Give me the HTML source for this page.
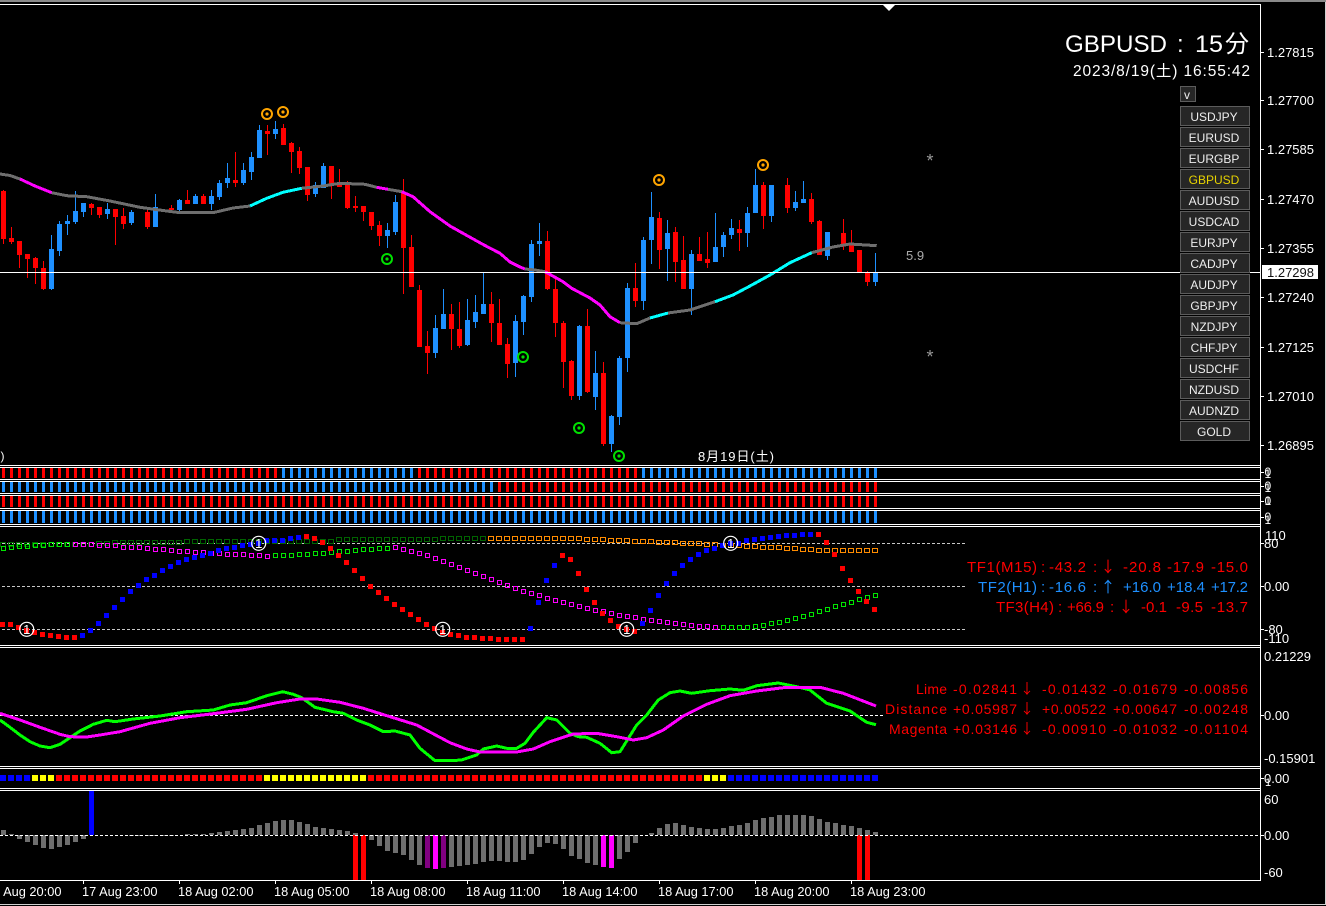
<!DOCTYPE html>
<html lang="ja">
<head>
<meta charset="utf-8">
<title>GBPUSD : 15分</title>
<style>
html,body{margin:0;padding:0;background:#000;width:1326px;height:906px;overflow:hidden}
svg{display:block;position:absolute;left:0;top:0}
text{font-family:"Liberation Sans","Noto Sans CJK JP",sans-serif;fill:#fff;font-size:13px;white-space:pre}
.c{shape-rendering:crispEdges}
.btn rect{fill:#262626;stroke:#5c5c5c;stroke-width:1;shape-rendering:crispEdges}
.btn text{font-size:12px;text-anchor:middle;fill:#eee}
.r text{fill:#f00;font-size:15px}
.b text{fill:#1e90ff;font-size:15px}
.l text{fill:#f00;font-size:14px}
.r .a,.b .a,.l .a{font-family:"Noto Sans CJK JP",sans-serif}
.t text{font-size:12.8px}
polyline{fill:none;stroke:none}
</style>
</head>
<body>
<svg width="1326" height="906" viewBox="0 0 1326 906" xmlns="http://www.w3.org/2000/svg">
<defs>
<marker id="fr" markerUnits="userSpaceOnUse" markerWidth="12" markerHeight="12" refX="5" refY="5"><rect class="c" x="2" y="3" width="5" height="5" fill="#f00"/></marker>
<marker id="fb" markerUnits="userSpaceOnUse" markerWidth="12" markerHeight="12" refX="5" refY="5"><rect class="c" x="2" y="3" width="5" height="5" fill="#00f"/></marker>
</defs>

<!-- top bar and window edges -->
<rect class="c" x="0" y="0" width="1326" height="2" fill="#8a8a8a"/>
<rect class="c" x="0" y="904" width="1326" height="1" fill="#d0d0d0"/>
<rect class="c" x="1325" y="2" width="1" height="903" fill="#d0d0d0"/>

<!-- candles: red wicks -->
<path class="c" fill="none" stroke="#f00" stroke-width="1" d="M3.5 190V244M11.5 227V244M19.5 241V268M27.5 254V278M35.5 257V284M43.5 261V290M91.5 203V215M99.5 207V218M115.5 209V245M123.5 208V229M147.5 210V229M171.5 205V210M187.5 190V204M203.5 194V204M235.5 152V187M267.5 125V155M283.5 124V145M291.5 142V173M299.5 147V174M307.5 167V201M331.5 166V199M339.5 169V187M347.5 181V209M355.5 196V212M363.5 206V221M371.5 212V230M379.5 221V246M403.5 179V294M411.5 235V287M419.5 285V347M427.5 331V374M451.5 304V350M459.5 302V348M491.5 292V342M499.5 299V345M507.5 338V378M547.5 231V290M555.5 279V337M563.5 321V388M571.5 360V400M587.5 309V393M603.5 362V446M635.5 263V307M659.5 212V269M675.5 227V282M683.5 236V289M699.5 237V261M707.5 232V268M739.5 220V251M763.5 182V229M787.5 178V213M811.5 193V224M819.5 220V255M843.5 219V250M851.5 230V252M859.5 250V273M867.5 271V286"/>
<!-- candles: red bodies -->
<path class="c" fill="none" stroke="#f00" stroke-width="5" d="M3.5 191V239M11.5 238V242M19.5 241V255M27.5 254V259M35.5 258V268M43.5 268V289M91.5 204V208M99.5 207V215M115.5 209V217M123.5 216V224M147.5 212V227M171.5 208V210M187.5 200V204M203.5 196V204M235.5 180V183M267.5 131V134M283.5 128V145M291.5 143V152M299.5 151V168M307.5 167V195M331.5 166V184M339.5 184V187M347.5 185V208M355.5 206V208M363.5 206V212M371.5 212V226M379.5 225V236M403.5 192V248M411.5 247V287M419.5 290V347M427.5 346V353M451.5 314V329M459.5 329V346M491.5 304V323M499.5 323V345M507.5 344V364M547.5 241V289M555.5 289V323M563.5 323V362M571.5 361V396M587.5 326V392M603.5 373V444M635.5 288V301M659.5 218V250M675.5 232V262M683.5 260V289M699.5 254V261M707.5 259V263M739.5 229V233M763.5 185V216M787.5 185V208M811.5 199V222M819.5 221V255M843.5 233V245M851.5 245V252M859.5 250V273M867.5 272V282"/>
<!-- candles: blue wicks -->
<path class="c" fill="none" stroke="#1e90ff" stroke-width="1" d="M51.5 235V290M59.5 221V256M67.5 215V235M75.5 191V224M83.5 203V217M107.5 203V219M131.5 210V225M155.5 194V227M179.5 199V211M195.5 194V204M211.5 190V210M219.5 180V200M227.5 163V188M243.5 163V185M251.5 152V180M259.5 125V158M275.5 121V139M315.5 182V197M323.5 163V188M387.5 223V248M395.5 195V235M435.5 315V358M443.5 289V329M467.5 299V346M475.5 295V328M483.5 273V314M515.5 315V377M523.5 295V335M531.5 240V302M539.5 223V256M579.5 325V400M595.5 351V410M611.5 415V452M619.5 356V425M627.5 283V372M643.5 237V310M651.5 192V264M667.5 220V281M691.5 250V315M715.5 213V262M723.5 232V257M731.5 219V239M747.5 207V247M755.5 169V213M771.5 185V222M795.5 191V211M803.5 181V203M827.5 232V260M875.5 253V286"/>
<!-- candles: blue bodies -->
<path class="c" fill="none" stroke="#1e90ff" stroke-width="5" d="M51.5 249V289M59.5 224V251M67.5 221V224M75.5 211V222M83.5 203V212M107.5 209V214M131.5 212V223M155.5 207V227M179.5 200V210M195.5 196V204M211.5 196V204M219.5 183V197M227.5 178V183M243.5 170V183M251.5 157V172M259.5 130V158M275.5 129V134M315.5 185V194M323.5 166V188M387.5 230V236M395.5 202V232M435.5 328V353M443.5 314V329M467.5 320V345M475.5 312V322M483.5 304V314M515.5 321V363M523.5 296V322M531.5 244V297M539.5 241V244M579.5 326V396M595.5 373V397M611.5 416V444M619.5 358V417M627.5 288V358M643.5 240V301M651.5 217V240M667.5 233V249M691.5 254V289M715.5 247V262M723.5 235V247M731.5 228V235M747.5 213V233M755.5 185V213M771.5 185V216M795.5 202V208M803.5 199V203M827.5 232V256M875.5 272V282"/>

<!-- moving average -->
<g class="c" fill="none" stroke-width="3" stroke-linejoin="round">
<polyline style="stroke:#6e6e6e" points="0,174 10,175.5 20,179"/>
<polyline style="stroke:#f0f" points="20,179 35,186 51.7,192.7"/>
<polyline style="stroke:#6e6e6e" points="51.7,192.7 66.7,195.7 86.7,196.7 110,201 140,207.3 166.7,211 180,212.7 213,212.7 233,208 250,206"/>
<polyline style="stroke:#0ff" points="250,206 266.7,198.3 283,192.3 301.7,188.3"/>
<polyline style="stroke:#6e6e6e" points="301.7,188.3 323,186 340,183.3 365,184.3 376.7,187.3"/>
<polyline style="stroke:#f0f" points="376.7,187.3 388,189.3"/>
<polyline style="stroke:#6e6e6e" points="388,189.3 401.7,191.7"/>
<polyline style="stroke:#f0f" points="401.7,191.7 413,196.7 430,211.7 450,226 466,235 484,245 500,253.3 510,262 520,267 525,269"/>
<polyline style="stroke:#6e6e6e" points="525,269 535,270 545,271.7"/>
<polyline style="stroke:#f0f" points="545,271.7 563,281.7 571.7,288.3 590,298 600,305 610,316.7 620,322.7"/>
<polyline style="stroke:#6e6e6e" points="620,322.7 636.7,323.7 650,318"/>
<polyline style="stroke:#0ff" points="650,318 668,313"/>
<polyline style="stroke:#6e6e6e" points="668,313 690,310 715,301.7"/>
<polyline style="stroke:#0ff" points="715,301.7 733,295 750,286 770,275 790,262.7 811.7,252.7"/>
<polyline style="stroke:#6e6e6e" points="811.7,252.7 833,247 850,244 876.7,245.7"/>
</g>

<!-- current price line and frames -->
<path class="c" fill="none" stroke="#fff" stroke-width="1" d="M0 272.5H1260M0 4.5H1260M0 465.5H1260M0 467.5H1260M0 479.5H1260M0 481.5H1260M0 493.5H1260M0 495.5H1260M0 508.5H1260M0 510.5H1260M0 524.5H1260M0 526.5H1260M0 645.5H1260M0 647.5H1260M0 766.5H1260M0 768.5H1260M0 788.5H1260M0 790.5H1260M0 880.5H1260M1260.5 4V881"/>
<polygon points="883,5 895,5 889,11" fill="#fff"/>

<!-- markers -->
<g fill="none" stroke="#ffa500" stroke-width="2">
<circle cx="267" cy="114" r="5"/><circle cx="283" cy="112" r="5"/><circle cx="659" cy="180" r="5"/><circle cx="763" cy="165" r="5"/>
</g>
<g fill="#ffa500"><circle cx="267" cy="114" r="1.6"/><circle cx="283" cy="112" r="1.6"/><circle cx="659" cy="180" r="1.6"/><circle cx="763" cy="165" r="1.6"/></g>
<g fill="none" stroke="#00e000" stroke-width="2">
<circle cx="387" cy="259" r="5"/><circle cx="523" cy="357" r="5"/><circle cx="579" cy="428" r="5"/><circle cx="619" cy="456" r="5"/>
</g>
<g fill="#00e000"><circle cx="387" cy="259" r="1.6"/><circle cx="523" cy="357" r="1.6"/><circle cx="579" cy="428" r="1.6"/><circle cx="619" cy="456" r="1.6"/></g>

<text x="926.5" y="167" style="fill:#999;font-size:18px">*</text>
<text x="926.5" y="363" style="fill:#999;font-size:18px">*</text>
<text x="906" y="260" style="fill:#aaa">5.9</text>
<text x="0.5" y="460" style="font-size:12px">)</text>
<text x="698" y="461" textLength="76" lengthAdjust="spacing" style="font-size:13px">8月19日(土)</text>

<!-- title -->
<text x="1065" y="52" textLength="102" lengthAdjust="spacingAndGlyphs" style="font-size:24px">GBPUSD</text>
<text x="1177" y="52" style="font-size:24px">:</text>
<text x="1195" y="52" textLength="28" lengthAdjust="spacingAndGlyphs" style="font-size:24px">15</text>
<text x="1225" y="52" style="font-size:24px">分</text>
<text x="1073" y="76" textLength="177" lengthAdjust="spacing" style="font-size:15.5px">2023/8/19(土) 16:55:42</text>

<!-- buttons -->
<g class="btn">
<rect x="1180.5" y="86.5" width="15" height="15"/><text x="1187" y="99">v</text>
<rect x="1180.5" y="106.5" width="69" height="19"/><text x="1214" y="121">USDJPY</text>
<rect x="1180.5" y="127.5" width="69" height="19"/><text x="1214" y="142">EURUSD</text>
<rect x="1180.5" y="148.5" width="69" height="19"/><text x="1214" y="163">EURGBP</text>
<rect x="1180.5" y="169.5" width="69" height="19"/><text x="1214" y="184" style="fill:#e6d200">GBPUSD</text>
<rect x="1180.5" y="190.5" width="69" height="19"/><text x="1214" y="205">AUDUSD</text>
<rect x="1180.5" y="211.5" width="69" height="19"/><text x="1214" y="226">USDCAD</text>
<rect x="1180.5" y="232.5" width="69" height="19"/><text x="1214" y="247">EURJPY</text>
<rect x="1180.5" y="253.5" width="69" height="19"/><text x="1214" y="268">CADJPY</text>
<rect x="1180.5" y="274.5" width="69" height="19"/><text x="1214" y="289">AUDJPY</text>
<rect x="1180.5" y="295.5" width="69" height="19"/><text x="1214" y="310">GBPJPY</text>
<rect x="1180.5" y="316.5" width="69" height="19"/><text x="1214" y="331">NZDJPY</text>
<rect x="1180.5" y="337.5" width="69" height="19"/><text x="1214" y="352">CHFJPY</text>
<rect x="1180.5" y="358.5" width="69" height="19"/><text x="1214" y="373">USDCHF</text>
<rect x="1180.5" y="379.5" width="69" height="19"/><text x="1214" y="394">NZDUSD</text>
<rect x="1180.5" y="400.5" width="69" height="19"/><text x="1214" y="415">AUDNZD</text>
<rect x="1180.5" y="421.5" width="69" height="19"/><text x="1214" y="436">GOLD</text>
</g>

<!-- price axis -->
<path class="c" fill="none" stroke="#fff" d="M1261 52.5h3M1261 100.5h3M1261 149.5h3M1261 199.5h3M1261 248.5h3M1261 297.5h3M1261 347.5h3M1261 396.5h3M1261 445.5h3M1261 472.5h3M1261 486.5h3M1261 501.5h3M1261 517.5h3M1261 543.5h3M1261 586.5h3M1261 629.5h3M1261 715.5h3M1261 778.5h3M1261 835.5h3"/>
<text x="1267" y="57">1.27815</text>
<text x="1267" y="105">1.27700</text>
<text x="1267" y="154">1.27585</text>
<text x="1267" y="204">1.27470</text>
<text x="1267" y="253">1.27355</text>
<rect class="c" x="1262" y="265" width="56" height="14" fill="#fff"/>
<text x="1267" y="277" style="fill:#101010">1.27298</text>
<text x="1267" y="302">1.27240</text>
<text x="1267" y="352">1.27125</text>
<text x="1267" y="401">1.27010</text>
<text x="1267" y="450">1.26895</text>

<!-- bar strips -->
<g class="c" fill="none" stroke-dasharray="3 5">
<path stroke="#f00" stroke-width="10" d="M2 473H282"/>
<path stroke="#1e90ff" stroke-width="10" d="M282 473H418"/>
<path stroke="#f00" stroke-width="10" d="M418 473H642"/>
<path stroke="#1e90ff" stroke-width="10" d="M642 473H878"/>
<path stroke="#1e90ff" stroke-width="10" d="M2 487H498"/>
<path stroke="#f00" stroke-width="10" d="M498 487H878"/>
<path stroke="#f00" stroke-width="11" d="M2 501.5H878"/>
<path stroke="#1e90ff" stroke-width="12" d="M2 517H878"/>
</g>
<text x="1264.5" y="476" style="font-size:12px">0</text><text x="1264.5" y="478" style="font-size:12px">1</text>
<text x="1264.5" y="490" style="font-size:12px">0</text><text x="1264.5" y="492" style="font-size:12px">1</text>
<text x="1264.5" y="505" style="font-size:12px">1</text><text x="1264.5" y="505" style="font-size:12px">0</text>
<text x="1264.5" y="521" style="font-size:12px">0</text><text x="1264.5" y="524" style="font-size:12px">1</text>

<!-- TF panel -->
<path class="c" fill="none" stroke="#c8c8c8" stroke-dasharray="3 2" d="M2 543.5H967M2 586.5H967M2 629.5H967"/>
<!-- upper hollow series, dark green -->
<path class="c" fill="none" stroke="#006400" d="M.5 542.5h5v4h-5zM8.5 542.5h5v4h-5zM16.5 542.5h5v4h-5zM24.5 542.5h5v4h-5zM32.5 542.5h5v4h-5zM40.5 542.5h5v4h-5zM48.5 542.5h5v4h-5zM56.5 542.5h5v4h-5zM64.5 542.5h5v4h-5zM72.5 542.5h5v4h-5zM80.5 542.5h5v4h-5zM88.5 542.5h5v4h-5zM96.5 541.5h5v4h-5zM104.5 541.5h5v4h-5zM112.5 540.5h5v4h-5zM120.5 540.5h5v4h-5zM128.5 540.5h5v4h-5zM136.5 540.5h5v4h-5zM144.5 540.5h5v4h-5zM152.5 540.5h5v4h-5zM160.5 540.5h5v4h-5zM168.5 540.5h5v4h-5zM176.5 540.5h5v4h-5zM184.5 539.5h5v4h-5zM192.5 539.5h5v4h-5zM200.5 539.5h5v4h-5zM208.5 539.5h5v4h-5zM216.5 539.5h5v4h-5zM224.5 539.5h5v4h-5zM232.5 539.5h5v4h-5zM240.5 539.5h5v4h-5zM248.5 539.5h5v4h-5zM256.5 539.5h5v4h-5zM264.5 539.5h5v4h-5zM272.5 539.5h5v4h-5zM280.5 539.5h5v4h-5zM288.5 539.5h5v4h-5zM296.5 539.5h5v4h-5zM304.5 539.5h5v4h-5zM312.5 539.5h5v4h-5zM320.5 539.5h5v4h-5zM328.5 539.5h5v4h-5zM336.5 537.5h5v4h-5zM344.5 537.5h5v4h-5zM352.5 537.5h5v4h-5zM360.5 537.5h5v4h-5zM368.5 537.5h5v4h-5zM376.5 537.5h5v4h-5zM384.5 537.5h5v4h-5zM392.5 537.5h5v4h-5zM400.5 537.5h5v4h-5zM408.5 537.5h5v4h-5zM416.5 537.5h5v4h-5zM424.5 537.5h5v4h-5zM432.5 537.5h5v4h-5zM440.5 536.5h5v4h-5zM448.5 536.5h5v4h-5zM456.5 536.5h5v4h-5zM464.5 536.5h5v4h-5zM472.5 536.5h5v4h-5zM480.5 536.5h5v4h-5z"/>
<!-- upper hollow series, orange -->
<path class="c" fill="none" stroke="#ff8c00" d="M488.5 536.5h5v4h-5zM496.5 536.5h5v4h-5zM504.5 536.5h5v4h-5zM512.5 536.5h5v4h-5zM520.5 536.5h5v4h-5zM528.5 536.5h5v4h-5zM536.5 536.5h5v4h-5zM544.5 536.5h5v4h-5zM552.5 536.5h5v4h-5zM560.5 536.5h5v4h-5zM568.5 536.5h5v4h-5zM576.5 536.5h5v4h-5zM584.5 537.5h5v4h-5zM592.5 537.5h5v4h-5zM600.5 537.5h5v4h-5zM608.5 538.5h5v4h-5zM616.5 538.5h5v4h-5zM624.5 538.5h5v4h-5zM632.5 539.5h5v4h-5zM640.5 539.5h5v4h-5zM648.5 539.5h5v4h-5zM656.5 540.5h5v4h-5zM664.5 540.5h5v4h-5zM672.5 540.5h5v4h-5zM680.5 541.5h5v4h-5zM688.5 541.5h5v4h-5zM696.5 541.5h5v4h-5zM704.5 542.5h5v4h-5zM712.5 542.5h5v4h-5zM720.5 543.5h5v4h-5zM728.5 543.5h5v4h-5zM736.5 543.5h5v4h-5zM744.5 544.5h5v4h-5zM752.5 544.5h5v4h-5zM760.5 545.5h5v4h-5zM768.5 545.5h5v4h-5zM776.5 545.5h5v4h-5zM784.5 546.5h5v4h-5zM792.5 546.5h5v4h-5zM800.5 547.5h5v4h-5zM808.5 547.5h5v4h-5zM816.5 548.5h5v4h-5zM824.5 548.5h5v4h-5zM832.5 548.5h5v4h-5zM840.5 548.5h5v4h-5zM848.5 548.5h5v4h-5zM856.5 548.5h5v4h-5zM864.5 548.5h5v4h-5zM872.5 548.5h5v4h-5z"/>
<!-- lower hollow series, lime -->
<path class="c" fill="none" stroke="#00e600" d="M1.5 546.5h4v4h-4zM9.5 545.5h4v4h-4zM17.5 544.5h4v4h-4zM25.5 544.5h4v4h-4zM33.5 543.5h4v4h-4zM41.5 543.5h4v4h-4zM49.5 542.5h4v4h-4zM57.5 542.5h4v4h-4zM65.5 542.5h4v4h-4zM273.5 553.5h4v4h-4zM281.5 553.5h4v4h-4zM289.5 553.5h4v4h-4zM297.5 552.5h4v4h-4zM305.5 552.5h4v4h-4zM313.5 551.5h4v4h-4zM321.5 551.5h4v4h-4zM329.5 550.5h4v4h-4zM337.5 549.5h4v4h-4zM345.5 549.5h4v4h-4zM353.5 548.5h4v4h-4zM361.5 547.5h4v4h-4zM369.5 547.5h4v4h-4zM377.5 546.5h4v4h-4zM385.5 546.5h4v4h-4zM721.5 625.5h4v4h-4zM729.5 625.5h4v4h-4zM737.5 625.5h4v4h-4zM745.5 625.5h4v4h-4zM753.5 624.5h4v4h-4zM761.5 623.5h4v4h-4zM769.5 621.5h4v4h-4zM777.5 620.5h4v4h-4zM785.5 618.5h4v4h-4zM793.5 616.5h4v4h-4zM801.5 614.5h4v4h-4zM809.5 612.5h4v4h-4zM817.5 609.5h4v4h-4zM825.5 607.5h4v4h-4zM833.5 604.5h4v4h-4zM841.5 602.5h4v4h-4zM849.5 600.5h4v4h-4zM857.5 597.5h4v4h-4zM865.5 595.5h4v4h-4zM873.5 593.5h4v4h-4z"/>
<!-- lower hollow series, magenta -->
<path class="c" fill="none" stroke="#f0f" d="M73.5 542.5h4v4h-4zM81.5 542.5h4v4h-4zM89.5 542.5h4v4h-4zM97.5 543.5h4v4h-4zM105.5 543.5h4v4h-4zM113.5 543.5h4v4h-4zM121.5 545.5h4v4h-4zM129.5 545.5h4v4h-4zM137.5 545.5h4v4h-4zM145.5 546.5h4v4h-4zM153.5 547.5h4v4h-4zM161.5 547.5h4v4h-4zM169.5 548.5h4v4h-4zM177.5 549.5h4v4h-4zM185.5 549.5h4v4h-4zM193.5 550.5h4v4h-4zM201.5 550.5h4v4h-4zM209.5 551.5h4v4h-4zM217.5 551.5h4v4h-4zM225.5 552.5h4v4h-4zM233.5 552.5h4v4h-4zM241.5 552.5h4v4h-4zM249.5 553.5h4v4h-4zM257.5 553.5h4v4h-4zM265.5 554.5h4v4h-4zM393.5 545.5h4v4h-4zM401.5 547.5h4v4h-4zM409.5 549.5h4v4h-4zM417.5 551.5h4v4h-4zM425.5 553.5h4v4h-4zM433.5 556.5h4v4h-4zM441.5 559.5h4v4h-4zM449.5 562.5h4v4h-4zM457.5 565.5h4v4h-4zM465.5 568.5h4v4h-4zM473.5 571.5h4v4h-4zM481.5 574.5h4v4h-4zM489.5 577.5h4v4h-4zM497.5 580.5h4v4h-4zM505.5 583.5h4v4h-4zM513.5 586.5h4v4h-4zM521.5 589.5h4v4h-4zM529.5 591.5h4v4h-4zM537.5 593.5h4v4h-4zM545.5 596.5h4v4h-4zM553.5 598.5h4v4h-4zM561.5 600.5h4v4h-4zM569.5 602.5h4v4h-4zM577.5 604.5h4v4h-4zM585.5 606.5h4v4h-4zM593.5 608.5h4v4h-4zM601.5 609.5h4v4h-4zM609.5 611.5h4v4h-4zM617.5 613.5h4v4h-4zM625.5 614.5h4v4h-4zM633.5 615.5h4v4h-4zM641.5 617.5h4v4h-4zM649.5 618.5h4v4h-4zM657.5 619.5h4v4h-4zM665.5 620.5h4v4h-4zM673.5 621.5h4v4h-4zM681.5 622.5h4v4h-4zM689.5 623.5h4v4h-4zM697.5 624.5h4v4h-4zM705.5 624.5h4v4h-4zM713.5 625.5h4v4h-4z"/>
<polyline style="marker:url(#fr)" points="3,624 11,624 19,627 27,630 35,632 43,634 51,635 59,636 67,637 75,637"/>
<polyline style="marker:url(#fb)" points="83,635 91,630 99,623 107,615 115,607 123,599 131,591 139,585 147,579 155,575 163,570 171,566 179,562 187,559 195,557 203,555 211,553 219,550 227,548 235,547 243,545 251,544 259,543 267,540 275,540 283,540 291,538 299,537"/>
<polyline style="marker:url(#fr)" points="307,536 315,538 323,542 331,548 339,555 347,562 355,570 363,578 371,586 379,592 387,598 395,604 403,609 411,614 419,619 427,624 435,628 443,632 451,634 459,635 467,637 475,637 483,638 491,638 499,639 507,639 515,639 523,639"/>
<polyline style="marker:url(#fb)" points="531,628 539,602 547,580 555,565"/>
<polyline style="marker:url(#fr)" points="563,555 571,559 579,573 587,589 595,602 603,613 611,620 619,626 627,629 635,631"/>
<polyline style="marker:url(#fb)" points="643,623 651,610 659,595 667,583 675,573 683,565 691,559 699,554 707,550 715,548 723,545 731,543 739,543 747,540 755,539 763,538 771,537 779,536 787,535 795,535 803,534 811,534"/>
<polyline style="marker:url(#fr)" points="819,534 827,542 835,554 843,568 851,580 859,591 867,601 875,609"/>
<g fill="none" stroke="#fff" stroke-width="1.2">
<circle cx="26.7" cy="629.3" r="7"/><circle cx="258.7" cy="543.3" r="7"/><circle cx="442.7" cy="629.3" r="7"/><circle cx="626.7" cy="629.3" r="7"/><circle cx="730.7" cy="543.3" r="7"/>
</g>
<text x="26.7" y="634" text-anchor="middle" style="font-size:13px">1</text>
<text x="258.7" y="548" text-anchor="middle" style="font-size:13px">1</text>
<text x="442.7" y="634" text-anchor="middle" style="font-size:13px">1</text>
<text x="626.7" y="634" text-anchor="middle" style="font-size:13px">1</text>
<text x="730.7" y="548" text-anchor="middle" style="font-size:13px">1</text>
<text x="1265" y="540">110</text>
<text x="1264" y="548">80</text>
<text x="1264" y="591">0.00</text>
<text x="1264" y="634">-80</text>
<text x="1264" y="643">-110</text>

<g class="r">
<text x="967" y="572" textLength="70">TF1(M15)</text><text x="1041" y="572">:</text><text x="1049" y="572" textLength="37">-43.2</text><text x="1093" y="572">:</text><text class="a" x="1100.5" y="572">↓</text><text x="1123" y="572" textLength="38">-20.8</text><text x="1167" y="572" textLength="37">-17.9</text><text x="1211" y="572" textLength="37">-15.0</text>
</g>
<g class="b">
<text x="978" y="592" textLength="59">TF2(H1)</text><text x="1041" y="592">:</text><text x="1049" y="592" textLength="37">-16.6</text><text x="1093" y="592">:</text><text class="a" x="1100.5" y="592">↑</text><text x="1123" y="592" textLength="38">+16.0</text><text x="1167" y="592" textLength="38">+18.4</text><text x="1211" y="592" textLength="37">+17.2</text>
</g>
<g class="r">
<text x="996" y="612" textLength="58">TF3(H4)</text><text x="1058" y="612">:</text><text x="1067" y="612" textLength="37">+66.9</text><text x="1110" y="612">:</text><text class="a" x="1118.5" y="612">↓</text><text x="1141" y="612" textLength="26">-0.1</text><text x="1176" y="612" textLength="27">-9.5</text><text x="1211" y="612" textLength="37">-13.7</text>
</g>

<!-- oscillator panel -->
<path class="c" fill="none" stroke="#fff" stroke-dasharray="3 2" d="M0 715.5H885"/>
<polyline class="c" style="stroke:#0f0;stroke-width:3" points="0,720 10,727.3 20,735 30,741.7 40,746 50,747.7 60,744.3 70,737.7 80,731 93.3,724.3 106.7,720.3 115,721.7 133.3,719 160,716 186.7,711.7 213.3,710 230,705 246.7,702.7 266.7,695.7 282.7,691.7 293.3,694.3 301.7,697.7 315,707.3 333.3,711.7 343.3,713.3 356.7,720 370,725 383.3,731.7 395,731 410,735 420,748.3 435,760.7 450,760.7 461.7,760 476.7,755 483.3,749 496.7,746 506.7,748.3 516.7,748.3 525,743.3 533.3,732.3 546.7,717.7 556.7,720 570,733.3 578.3,736.7 586.7,737.3 600,743.3 611.7,752.7 620,751.7 636.7,725 646.7,715 658.3,700 670,692.7 680,691 691.7,693.3 710,690.7 730,689 743.3,690.3 756.7,685.7 778.3,683 796.7,686.7 810,690 826.7,703.3 850,711 866.7,722.3 876,724.7"/>
<polyline class="c" style="stroke:#f0f;stroke-width:3" points="0,713.3 20,720 40,727.3 60,734.3 70,736.7 86.7,737 100,735 120,731.7 150,723.3 180,717.7 213.3,713.7 246.7,709.3 276.7,702.7 300,699 316.7,699 340,702.3 363.3,708.3 390,716.7 416.7,725 450,742.7 466.7,749 480,752 516.7,752 533.3,749 550,741.7 573.3,734 596.7,733.3 616.7,736.7 633.3,740 646.7,737.7 663.3,730 683.3,716 706.7,704.3 730,695.7 756.7,691 783.3,687.7 820,687.3 843.3,693.3 876,706"/>
<g class="l">
<text x="916" y="694" textLength="31">Lime</text><text x="953" y="694" textLength="64">-0.02841</text><text class="a" x="1020" y="694">↓</text><text x="1042" y="694" textLength="64">-0.01432</text><text x="1113" y="694" textLength="64">-0.01679</text><text x="1184" y="694" textLength="64">-0.00856</text>
<text x="885" y="714" textLength="62">Distance</text><text x="953" y="714" textLength="64">+0.05987</text><text class="a" x="1020" y="714">↓</text><text x="1042" y="714" textLength="64">+0.00522</text><text x="1113" y="714" textLength="64">+0.00647</text><text x="1184" y="714" textLength="64">-0.00248</text>
<text x="889" y="734" textLength="58">Magenta</text><text x="953" y="734" textLength="64">+0.03146</text><text class="a" x="1020" y="734">↓</text><text x="1042" y="734" textLength="64">-0.00910</text><text x="1113" y="734" textLength="64">-0.01032</text><text x="1184" y="734" textLength="64">-0.01104</text>
</g>
<text x="1264" y="661">0.21229</text>
<text x="1264" y="720">0.00</text>
<text x="1264" y="763">-0.15901</text>

<!-- state squares -->
<g class="c" fill="none" stroke-width="6" stroke-dasharray="6 2">
<path stroke="#00f" d="M0 778H32"/>
<path stroke="#ff0" d="M32 778H56"/>
<path stroke="#f00" d="M56 778H264"/>
<path stroke="#ff0" d="M264 778H368"/>
<path stroke="#f00" d="M368 778H704"/>
<path stroke="#ff0" d="M704 778H728"/>
<path stroke="#00f" d="M728 778H878"/>
</g>
<text x="1264" y="783">0.00</text><text x="1265" y="786" style="font-size:11px">1</text>

<!-- histogram -->
<path class="c" fill="none" stroke="#6e6e6e" stroke-width="5" d="M3.5 830V835M11.5 834V835M19.5 835V839M27.5 835V842M35.5 835V845M43.5 835V848M51.5 835V849M59.5 835V847M67.5 835V845M75.5 835V842M83.5 835V839M131.5 835V836M139.5 835V836M147.5 835V836M155.5 835V836M163.5 835V836M171.5 835V836M187.5 834V835M195.5 834V835M203.5 834V835M211.5 833V835M219.5 832V835M227.5 831V835M235.5 830V835M243.5 829V835M251.5 828V835M259.5 825V835M267.5 823V835M275.5 821V835M283.5 820V835M291.5 820V835M299.5 822V835M307.5 824V835M315.5 827V835M323.5 828V835M331.5 829V835M339.5 830V835M347.5 831V835M355.5 833V835M371.5 835V840M379.5 835V846M387.5 835V851M395.5 835V853M403.5 835V855M411.5 835V860M419.5 835V865M451.5 835V867M459.5 835V866M467.5 835V865M475.5 835V864M483.5 835V862M491.5 835V861M499.5 835V861M507.5 835V862M515.5 835V862M523.5 835V860M531.5 835V854M539.5 835V847M547.5 835V843M555.5 835V844M563.5 835V849M571.5 835V856M579.5 835V859M587.5 835V863M595.5 835V865M611.5 835V866M619.5 835V859M627.5 835V852M635.5 835V843M651.5 833V835M659.5 828V835M667.5 824V835M675.5 823V835M683.5 825V835M691.5 827V835M699.5 828V835M707.5 829V835M715.5 829V835M723.5 828V835M731.5 826V835M739.5 825V835M747.5 823V835M755.5 820V835M763.5 818V835M771.5 817V835M779.5 815V835M787.5 815V835M795.5 815V835M803.5 815V835M811.5 816V835M819.5 819V835M827.5 822V835M835.5 823V835M843.5 825V835M851.5 826V835M859.5 828V835M867.5 830V835M875.5 832V835"/>
<path class="c" fill="none" stroke="#00f" stroke-width="5" d="M91.5 791V835"/>
<path class="c" fill="none" stroke="#f00" stroke-width="5" d="M355.5 835V880M363.5 835V880M859.5 835V880M867.5 835V880"/>
<path class="c" fill="none" stroke="#800080" stroke-width="5" d="M427.5 835V868M443.5 835V868"/>
<path class="c" fill="none" stroke="#f0f" stroke-width="5" d="M435.5 835V869M603.5 835V867M611.5 835V868"/>
<path class="c" fill="none" stroke="#fff" stroke-dasharray="3 2" d="M0 835.5H1260"/>
<text x="1264" y="804">60</text>
<text x="1264" y="840">0.00</text>
<text x="1264" y="877">-60</text>

<!-- time axis -->
<path class="c" fill="none" stroke="#fff" d="M83.5 881v3M179.5 881v3M275.5 881v3M371.5 881v3M467.5 881v3M563.5 881v3M659.5 881v3M755.5 881v3M851.5 881v3"/>
<g class="t">
<text x="-14" y="896">17 Aug 20:00</text>
<text x="82" y="896">17 Aug 23:00</text>
<text x="178" y="896">18 Aug 02:00</text>
<text x="274" y="896">18 Aug 05:00</text>
<text x="370" y="896">18 Aug 08:00</text>
<text x="466" y="896">18 Aug 11:00</text>
<text x="562" y="896">18 Aug 14:00</text>
<text x="658" y="896">18 Aug 17:00</text>
<text x="754" y="896">18 Aug 20:00</text>
<text x="850" y="896">18 Aug 23:00</text>
</g>
</svg>
</body>
</html>
